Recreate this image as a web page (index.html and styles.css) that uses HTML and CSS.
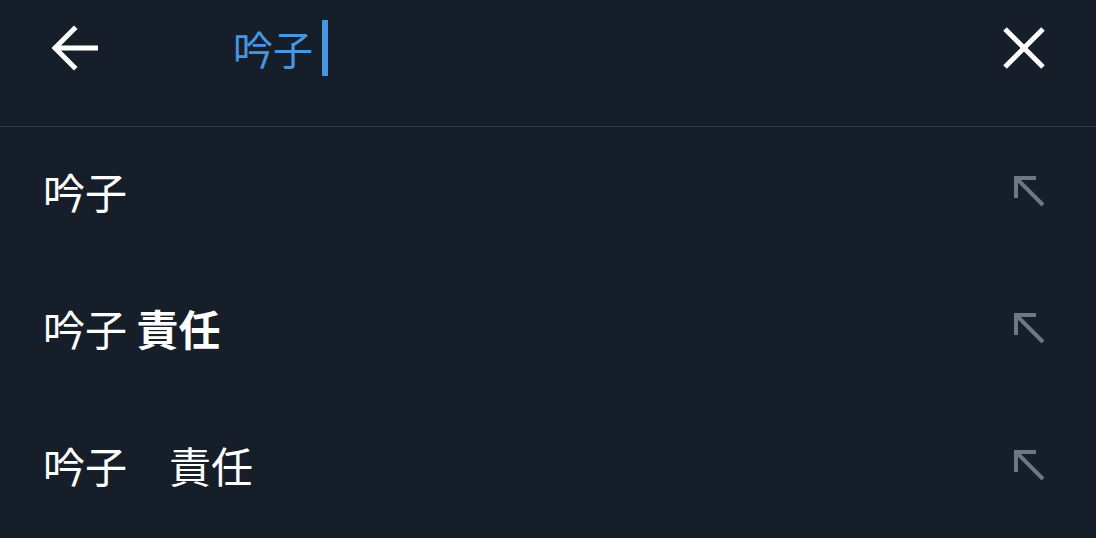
FILE: index.html
```html
<!DOCTYPE html>
<html lang="ja">
<head>
<meta charset="utf-8">
<link rel="stylesheet" href="styles.css">
</head>
<body>
<div class="app">
  <header class="search-bar">
    <button class="icon-btn back" aria-label="戻る">
      <svg width="48" height="48" viewBox="0 0 48 48"><path d="M46 24H6M24 5L5 24l19 19" fill="none" stroke="#fff" stroke-width="5" stroke-linecap="square"/></svg>
    </button>
    <div class="query"><span class="query-text">吟子</span><span class="caret"></span></div>
    <button class="icon-btn close" aria-label="クリア">
      <svg width="44" height="44" viewBox="0 0 44 44"><path d="M3 3L41 41M41 3L3 41" fill="none" stroke="#fff" stroke-width="5"/></svg>
    </button>
  </header>
  <ul class="suggestions">
    <li class="row"><span class="label">吟子</span><span class="fill-icon"><svg width="34" height="34" viewBox="0 0 34 34"><path d="M4 24V4h20M4 4l27 27" fill="none" stroke="#6e7885" stroke-width="4"/></svg></span></li>
    <li class="row"><span class="label">吟子 <b>責任</b></span><span class="fill-icon"><svg width="34" height="34" viewBox="0 0 34 34"><path d="M4 24V4h20M4 4l27 27" fill="none" stroke="#6e7885" stroke-width="4"/></svg></span></li>
    <li class="row"><span class="label">吟子　責任</span><span class="fill-icon"><svg width="34" height="34" viewBox="0 0 34 34"><path d="M4 24V4h20M4 4l27 27" fill="none" stroke="#6e7885" stroke-width="4"/></svg></span></li>
  </ul>
</div>
</body>
</html>
```

FILE: styles.css
```css
html, body {
  margin: 0;
  padding: 0;
  background: #161e29;
}
body {
  font-family: "Noto Sans CJK JP", "Noto Sans", sans-serif;
  color: #fff;
}
.app {
  width: 1096px;
  height: 538px;
  overflow: hidden;
}
.search-bar {
  border-bottom: 1px solid #343e4a;
  display: flex;
  align-items: center;
  padding: 0 50px 0 48px;
  box-sizing: border-box;
  height: 127px;
}
.icon-btn {
  background: none;
  border: 0;
  padding: 0;
  display: flex;
  align-items: center;
  justify-content: center;
}
.back {
  width: 52px;
  height: 52px;
  margin-top: -30px;
}
.query {
  flex: 1;
  display: flex;
  align-items: center;
  padding-left: 133px;
  margin-top: -30px;
}
.query-text {
  font-size: 40px;
  color: #4796e4;
  line-height: 48px;
}
.caret {
  width: 6px;
  height: 56px;
  background: #4796e4;
  margin-left: 9px;
}
.close {
  width: 44px;
  height: 44px;
  margin-top: -30px;
}
.suggestions {
  list-style: none;
  margin: 0;
  padding: 0;
}
.row {
  height: 137px;
  display: flex;
  align-items: center;
  justify-content: space-between;
  padding: 0 50px 0 43px;
  margin-top: -5px;
  margin-bottom: 5px;
}
.label {
  font-size: 42px;
  line-height: 50px;
  font-weight: 400;
}
.label b {
  font-weight: 700;
}
.fill-icon {
  display: flex;
  width: 34px;
  height: 34px;
}
```
